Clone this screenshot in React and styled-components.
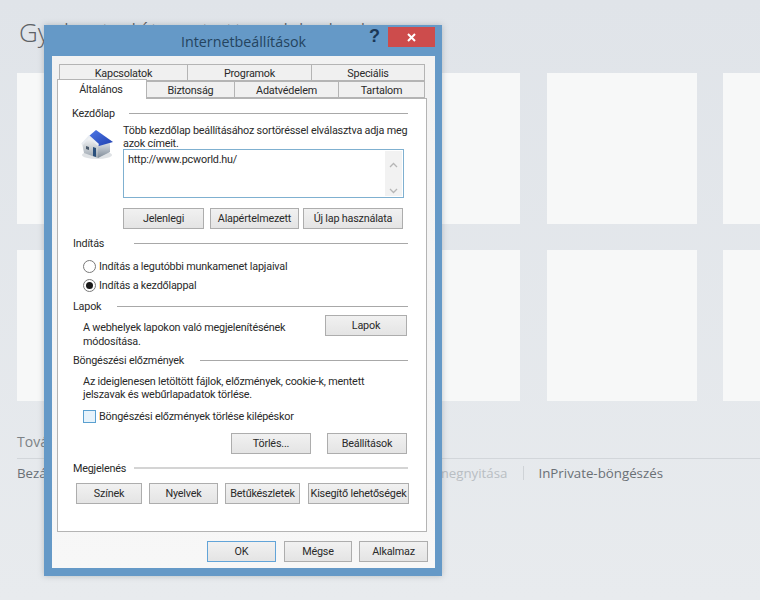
import React from "react";
import styled, { createGlobalStyle } from "styled-components";

const Global = createGlobalStyle`
  html, body { margin: 0; padding: 0; }
  body { font-family: "Open Sans", "Noto Sans", sans-serif; background: #e2e6ea; }
  * { box-sizing: border-box; }
`;

const Page = styled.div`
  position: relative;
  width: 760px;
  height: 600px;
  overflow: hidden;
  background: linear-gradient(#e0e4e9, #e8ebee);
  padding-top: 14px;
`;
const PageTitle = styled.h1`
  margin: 0 0 0 19px;
  height: 39px;
  line-height: 36px;
  font-size: 26px;
  font-weight: 300;
  color: #5d6266;
  white-space: nowrap;
`;
const TileGrid = styled.div`
  display: grid;
  grid-template-columns: repeat(5, 150px);
  grid-auto-rows: 150.5px;
  gap: 26.5px;
  margin: 20px 0 0 17px;
  width: 900px;
`;
const Tile = styled.div`
  background: #f7f8f8;
`;
const MoreLink = styled.div`
  margin: 32px 0 0 17px;
  height: 18px;
  line-height: 18px;
  font-size: 14px;
  color: #7c8286;
`;
const Divider = styled.div`
  margin: 7px 0 0 17px;
  height: 1px;
  background: #d2d6da;
`;
const LinkRow = styled.div`
  display: flex;
  align-items: center;
  margin: 5px 0 0 17px;
  height: 18px;
  font-size: 13.3px;
  white-space: nowrap;
`;
const PageLink = styled.span`
  color: ${(p) => (p.$dim ? "#b9bec3" : "#6a7075")};
  width: ${(p) => p.$w || "auto"};
  text-align: ${(p) => (p.$w ? "right" : "left")};
  flex: none;
`;
const Sep = styled.span`
  flex: none;
  width: 1px;
  height: 14px;
  margin: 0 ${(p) => p.$after || 16}px 0 16px;
  background: #cfd3d7;
`;

const Dialog = styled.div`
  position: absolute;
  left: 44px;
  top: 25px;
  width: 398px;
  height: 551px;
  background: #6599c7;
  padding: 0 7px 8px 8px;
  display: flex;
  flex-direction: column;
  box-shadow: 0 0 6px rgba(90, 100, 110, 0.35);
  font-family: Roboto, "Open Sans", sans-serif;
`;
const TitleBar = styled.div`
  flex: none;
  height: 31px;
  position: relative;
  display: flex;
  align-items: center;
  justify-content: center;
  padding-top: 1px;
  font-family: "Open Sans", sans-serif;
  font-size: 14.3px;
  color: #24445f;
`;
const HelpMark = styled.span`
  position: absolute;
  right: 55px;
  top: 0;
  font-family: "Liberation Sans", sans-serif;
  font-size: 18px;
  line-height: 22px;
  font-weight: 700;
  color: #1b3857;
`;
const CloseButton = styled.div`
  position: absolute;
  right: 0;
  top: 2px;
  width: 47px;
  height: 20px;
  background: #cd4c4c;
  display: flex;
  align-items: center;
  justify-content: center;
`;
const Client = styled.div`
  flex: 1;
  background: linear-gradient(#f2f2f2, #f7f7f7);
  padding: 8px 7px 0 5px;
  display: flex;
  flex-direction: column;
  font-size: 10.8px;
  letter-spacing: -0.2px;
  color: #2a2a2a;
`;
const TabRow = styled.div`
  display: flex;
  height: 17px;
  margin-left: ${(p) => p.$indent || 0}px;
`;
const Tab = styled.div`
  flex: none;
  width: ${(p) => p.$w}px;
  height: ${(p) => (p.$active ? 20 : 17)}px;
  margin-top: ${(p) => (p.$active ? -2 : 0)}px;
  border: 1px solid #b4b4b4;
  border-left-width: ${(p) => (p.$first ? 1 : 0)}px;
  border-bottom-width: ${(p) => (p.$active ? 0 : 1)}px;
  background: ${(p) => (p.$active ? "#fff" : "#f0f0f0")};
  position: relative;
  z-index: ${(p) => (p.$active ? 2 : 0)};
  display: flex;
  align-items: center;
  justify-content: center;
  padding: ${(p) => (p.$active ? 0 : 1)}px ${(p) => p.$pr || 0}px 0 0;
`;
const Panel = styled.div`
  width: 370px;
  height: 434px;
  border: 1px solid #b4b4b4;
  background: #fff;
  padding: 7px 18px 0 14px;
  position: relative;
  z-index: 1;
`;
const Heading = styled.div`
  display: flex;
  align-items: center;
  height: 14px;
  margin-top: ${(p) => p.$top || 0}px;
  margin-left: ${(p) => p.$left || 0}px;
  gap: ${(p) => p.$gap}px;
  white-space: nowrap;
  &::after {
    content: "";
    flex: 1;
    height: ${(p) => (p.$thick ? 2 : 1)}px;
    background: ${(p) => (p.$thick ? "#d4d4d4" : "#a8a8a8")};
  }
`;
const HomeBody = styled.div`
  display: flex;
  margin-top: 4px;
`;
const IconSlot = styled.div`
  flex: none;
  width: 51px;
  padding: 3px 0 0 8px;
`;
const HomeColumn = styled.div`
  width: 281px;
  margin-right: -4px;
`;
const Para = styled.p`
  margin: ${(p) => p.$top || 0}px 0 0 ${(p) => p.$left || 0}px;
  line-height: 13px;
  white-space: nowrap;
`;
const UrlBox = styled.div`
  height: 49px;
  margin-top: -1px;
  border: 1px solid #7fb0d0;
  display: flex;
  justify-content: space-between;
`;
const UrlText = styled.div`
  padding: 3px 0 0 4px;
  line-height: 14px;
`;
const ScrollTrack = styled.div`
  width: 17px;
  background: #f2f2f2;
  display: flex;
  flex-direction: column;
  justify-content: space-between;
  align-items: center;
  padding: 11px 0 2px;
  margin: 1px;
  color: #b6b6b6;
`;
const ButtonRow = styled.div`
  display: flex;
  margin-top: ${(p) => p.$top}px;
  margin-left: ${(p) => p.$left || 0}px;
`;
const Button = styled.div`
  flex: none;
  width: ${(p) => p.$w}px;
  height: 21px;
  margin-left: ${(p) => p.$gap || 0}px;
  border: 1px solid ${(p) => (p.$primary ? "#62a4d8" : "#adadad")};
  background: linear-gradient(#f1f1f1, #e4e4e4);
  display: flex;
  align-items: center;
  justify-content: center;
  white-space: nowrap;
`;
const OptionRow = styled.label`
  display: flex;
  align-items: center;
  height: ${(p) => p.$h || 19}px;
  margin-top: ${(p) => p.$top || 0}px;
  margin-left: ${(p) => p.$left}px;
  gap: 3px;
  white-space: nowrap;
`;
const Radio = styled.span`
  flex: none;
  width: 13px;
  height: 13px;
  border-radius: 50%;
  border: 1px solid #7a7a7a;
  background: #fff;
  display: flex;
  align-items: center;
  justify-content: center;
  &::after {
    content: "";
    width: 7px;
    height: 7px;
    border-radius: 50%;
    background: ${(p) => (p.$checked ? "#1a1a1a" : "transparent")};
  }
`;
const Check = styled.span`
  flex: none;
  width: 13px;
  height: 13px;
  border: 1px solid #5aa0d0;
  background: #e7f3fb;
`;
const TabsOptions = styled.div`
  display: flex;
  justify-content: space-between;
  margin: 2px 1px 0 11px;
`;
const TextTop = styled.div`
  padding-top: 6px;
  line-height: 14px;
  white-space: nowrap;
`;
const Footer = styled.div`
  display: flex;
  justify-content: flex-end;
  margin-top: 9px;
`;

const HomeIcon = () => (
  <svg width="34" height="33" viewBox="0 0 34 33" aria-hidden="true">
    <defs>
      <linearGradient id="wall" x1="0" y1="0" x2="0" y2="1">
        <stop offset="0" stopColor="#ffffff" />
        <stop offset="1" stopColor="#9aa4ae" />
      </linearGradient>
      <linearGradient id="side" x1="0" y1="0" x2="0" y2="1">
        <stop offset="0" stopColor="#dfe4ea" />
        <stop offset="1" stopColor="#7f8b98" />
      </linearGradient>
      <linearGradient id="roof" x1="0" y1="0" x2="1" y2="1">
        <stop offset="0" stopColor="#4f78e6" />
        <stop offset="1" stopColor="#1f3fb0" />
      </linearGradient>
    </defs>
    <ellipse cx="17" cy="28" rx="15" ry="4" fill="#c9ced3" opacity="0.6" />
    <path d="M2 16 L9 9 L18 17 L18 31 L4 26 Z" fill="url(#wall)" />
    <path d="M18 17 L30 15 L30 25 L18 31 Z" fill="url(#side)" />
    <path d="M9 9 L16 3 L33 15 L19 19 Z" fill="url(#roof)" />
    <path d="M1 17 L9 8 L19 17 L18 19 L9 11 L3 18 Z" fill="#e9edf2" />
    <path d="M13 20 L16 21 L16 30 L13 29 Z" fill="#2a4f7c" />
    <path d="M6 19 L9 20 L9 23 L6 22 Z" fill="#4a5a6c" />
  </svg>
);

const Chevron = ({ up }) => (
  <svg width="9" height="6" viewBox="0 0 9 6" aria-hidden="true">
    <path d={up ? "M1 5 L4.5 1.5 L8 5" : "M1 1 L4.5 4.5 L8 1"} fill="none" stroke="currentColor" strokeWidth="1.3" />
  </svg>
);

const CloseGlyph = () => (
  <svg width="9" height="9" viewBox="0 0 9 9" aria-hidden="true">
    <path d="M1 1 L8 8 M8 1 L1 8" stroke="#fff" strokeWidth="2" />
  </svg>
);

export default function App() {
  return (
    <Page>
      <Global />
      <PageTitle>Gyakorta látogatott webhelyek</PageTitle>
      <TileGrid>
        {Array.from({ length: 10 }, (_, i) => (
          <Tile key={i} />
        ))}
      </TileGrid>
      <MoreLink>További webhelyek felfedezése</MoreLink>
      <Divider />
      <LinkRow>
        <PageLink>Bezárt lapok újbóli megnyitása</PageLink>
        <Sep />
        <PageLink $dim $w="268px">Utolsó munkamenet újbóli megnyitása</PageLink>
        <Sep $after={14} />
        <PageLink>InPrivate-böngészés</PageLink>
      </LinkRow>

      <Dialog>
        <TitleBar>
          Internetbeállítások
          <HelpMark>?</HelpMark>
          <CloseButton>
            <CloseGlyph />
          </CloseButton>
        </TitleBar>
        <Client>
          <TabRow $indent={2}>
            <Tab $w={129} $first>Kapcsolatok</Tab>
            <Tab $w={124}>Programok</Tab>
            <Tab $w={113}>Speciális</Tab>
          </TabRow>
          <TabRow>
            <Tab $w={90} $first $active $pr={2}>Általános</Tab>
            <Tab $w={88}>Biztonság</Tab>
            <Tab $w={104}>Adatvédelem</Tab>
            <Tab $w={86}>Tartalom</Tab>
          </TabRow>
          <Panel>
            <Heading $gap={14}>Kezdőlap</Heading>
            <HomeBody>
              <IconSlot>
                <HomeIcon />
              </IconSlot>
              <HomeColumn>
                <Para>Több kezdőlap beállításához sortöréssel elválasztva adja meg</Para>
                <Para>azok címeit.</Para>
                <UrlBox>
                  <UrlText>http://www.pcworld.hu/</UrlText>
                  <ScrollTrack>
                    <Chevron up />
                    <Chevron />
                  </ScrollTrack>
                </UrlBox>
                <ButtonRow $top={10}>
                  <Button $w={81}>Jelenlegi</Button>
                  <Button $w={89} $gap={6}>Alapértelmezett</Button>
                  <Button $w={100} $gap={4}>Új lap használata</Button>
                </ButtonRow>
              </HomeColumn>
            </HomeBody>
            <Heading $top={7} $left={1} $gap={30}>Indítás</Heading>
            <OptionRow $top={7} $left={11}>
              <Radio />
              Indítás a legutóbbi munkamenet lapjaival
            </OptionRow>
            <OptionRow $left={11}>
              <Radio $checked />
              Indítás a kezdőlappal
            </OptionRow>
            <Heading $top={4} $left={1} $gap={16}>Lapok</Heading>
            <TabsOptions>
              <TextTop>
                A webhelyek lapokon való megjelenítésének
                <br />
                módosítása.
              </TextTop>
              <Button $w={82}>Lapok</Button>
            </TabsOptions>
            <Heading $top={4} $left={1} $gap={16}>Böngészési előzmények</Heading>
            <Para $top={8} $left={11}>Az ideiglenesen letöltött fájlok, előzmények, cookie-k, mentett</Para>
            <Para $left={11}>jelszavak és webűrlapadatok törlése.</Para>
            <OptionRow $top={8} $left={11} $h={14}>
              <Check />
              Böngészési előzmények törlése kilépéskor
            </OptionRow>
            <ButtonRow $top={10} $left={159}>
              <Button $w={80}>Törlés...</Button>
              <Button $w={80} $gap={16}>Beállítások</Button>
            </ButtonRow>
            <Heading $top={7} $left={1} $gap={8} $thick>Megjelenés</Heading>
            <ButtonRow $top={8} $left={4}>
              <Button $w={66}>Színek</Button>
              <Button $w={69} $gap={7}>Nyelvek</Button>
              <Button $w={75} $gap={7}>Betűkészletek</Button>
              <Button $w={101} $gap={8}>Kisegítő lehetőségek</Button>
            </ButtonRow>
          </Panel>
          <Footer>
            <Button $w={69} $primary>OK</Button>
            <Button $w={68} $gap={8}>Mégse</Button>
            <Button $w={69} $gap={7}>Alkalmaz</Button>
          </Footer>
        </Client>
      </Dialog>
    </Page>
  );
}
